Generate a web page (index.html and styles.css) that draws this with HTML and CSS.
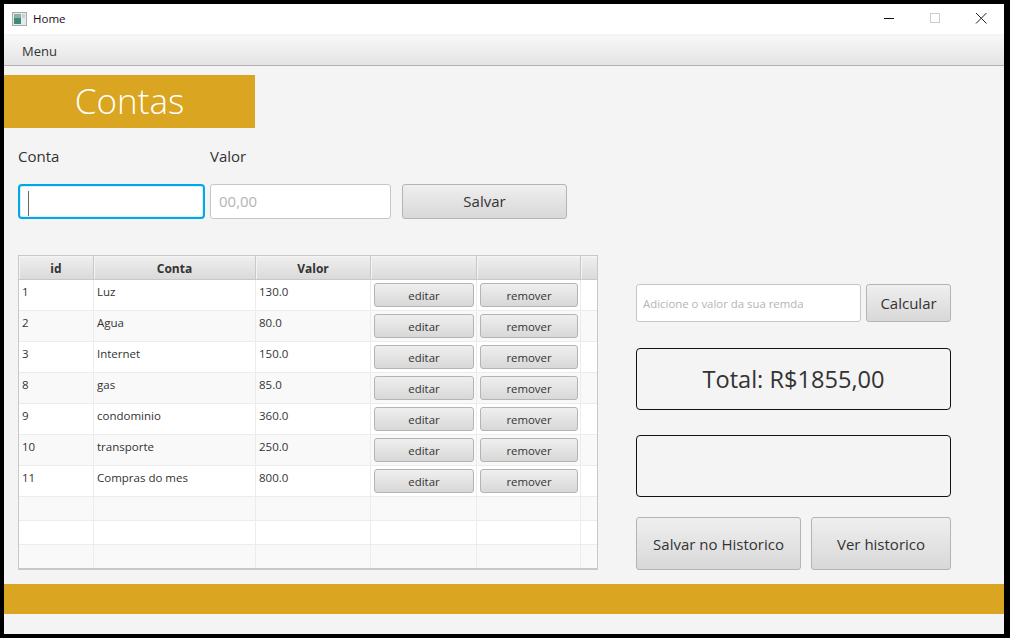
FILE: index.html
```html
<!DOCTYPE html>
<html lang="en">
<head>
  <meta charset="UTF-8">
  <meta name="viewport" content="width=device-width, initial-scale=1.0">
  <title>Home</title>
  <link rel="stylesheet" href="styles.css">
</head>
<body>
  <div class="window">
    <header class="titlebar">
      <svg class="app-icon" width="15" height="14" viewBox="0 0 15 14">
        <rect x="0.5" y="0.5" width="14" height="13" fill="#e6eaea" stroke="#a8acac"/>
        <rect x="2" y="2" width="7" height="10" fill="#8fb0aa"/>
        <rect x="2" y="6" width="7" height="6" fill="#3f8a78"/>
        <rect x="10" y="2" width="3" height="4" fill="#c4d4d8"/>
      </svg>
      <span class="title">Home</span>
      <div class="controls">
        <svg width="46" height="30" viewBox="0 0 46 30"><path d="M18 14.500h10" stroke="#111" fill="none"/></svg>
        <svg width="46" height="30" viewBox="0 0 46 30"><rect x="18.500" y="9.500" width="9" height="9" fill="none" stroke="#ccc"/></svg>
        <svg width="46" height="30" viewBox="0 0 46 30"><path d="M18 9l10.500 10.500M28.500 9L18 19.500" stroke="#222" fill="none"/></svg>
      </div>
    </header>
    <nav class="menubar"><span class="menu-item">Menu</span></nav>

    <h1 class="banner">Contas</h1>

    <main class="content">
      <section class="left">
        <div class="labels">
          <label class="conta-label">Conta</label>
          <label>Valor</label>
        </div>
        <div class="form-row">
          <div class="input-focused"><span class="caret"></span></div>
          <input class="input valor-input" type="text" placeholder="00,00">
          <button class="btn salvar">Salvar</button>
        </div>

        <table class="contas">
          <thead>
            <tr>
              <th class="col-id">id</th>
              <th class="col-conta">Conta</th>
              <th class="col-valor">Valor</th>
              <th class="col-edit"></th>
              <th class="col-rem"></th>
              <th class="col-bar"></th>
            </tr>
          </thead>
          <tbody>
            <tr><td>1</td><td>Luz</td><td>130.0</td><td><button class="btn small edit">editar</button></td><td><button class="btn small">remover</button></td><td></td></tr>
            <tr><td>2</td><td>Agua</td><td>80.0</td><td><button class="btn small edit">editar</button></td><td><button class="btn small">remover</button></td><td></td></tr>
            <tr><td>3</td><td>Internet</td><td>150.0</td><td><button class="btn small edit">editar</button></td><td><button class="btn small">remover</button></td><td></td></tr>
            <tr><td>8</td><td>gas</td><td>85.0</td><td><button class="btn small edit">editar</button></td><td><button class="btn small">remover</button></td><td></td></tr>
            <tr><td>9</td><td>condominio</td><td>360.0</td><td><button class="btn small edit">editar</button></td><td><button class="btn small">remover</button></td><td></td></tr>
            <tr><td>10</td><td>transporte</td><td>250.0</td><td><button class="btn small edit">editar</button></td><td><button class="btn small">remover</button></td><td></td></tr>
            <tr><td>11</td><td>Compras do mes</td><td>800.0</td><td><button class="btn small edit">editar</button></td><td><button class="btn small">remover</button></td><td></td></tr>
            <tr class="empty"><td></td><td></td><td></td><td></td><td></td><td></td></tr>
            <tr class="empty"><td></td><td></td><td></td><td></td><td></td><td></td></tr>
            <tr class="empty"><td></td><td></td><td></td><td></td><td></td><td></td></tr>
          </tbody>
        </table>
      </section>

      <aside class="right">
        <div class="renda-row">
          <input class="input renda-input" type="text" placeholder="Adicione o valor da sua remda">
          <button class="btn calcular">Calcular</button>
        </div>
        <div class="box total">Total: R$1855,00</div>
        <div class="box"></div>
        <div class="hist-row">
          <button class="btn salvar-hist">Salvar no Historico</button>
          <button class="btn ver-hist">Ver historico</button>
        </div>
      </aside>
    </main>

    <div class="footer-bar"></div>
  </div>
</body>
</html>
```

FILE: styles.css
```css
* {
  box-sizing: border-box;
}
html, body {
  height: 100%;
}
body {
  margin: 0;
  padding: 4px 6px 4px 4px;
  background: #000;
  font-family: "Open Sans", "Noto Sans", sans-serif;
  color: #333;
}
.window {
  width: 1000px;
  height: 630px;
  background: #f4f4f4;
  display: flex;
  flex-direction: column;
}

/* title bar */
.titlebar {
  height: 30px;
  flex: none;
  background: #fff;
  display: flex;
  align-items: center;
  padding-left: 8px;
  font-size: 11.500px;
  color: #1a0a20;
}
.app-icon {
  margin-right: 6px;
}
.title {
  padding-bottom: 1px;
}
.controls {
  margin-left: auto;
  display: flex;
}
.controls svg {
  display: block;
}

/* menu */
.menubar {
  height: 32px;
  flex: none;
  border-top: 2px solid #f4f4f4;
  border-bottom: 1px solid #b0b0b0;
  background: linear-gradient(#f8f8f8, #e4e4e4);
  display: flex;
  align-items: center;
  padding-left: 18px;
  font-size: 13px;
}
.banner {
  margin: 9px 0 0;
  width: 251px;
  height: 53px;
  flex: none;
  background: #daa520;
  color: #fff;
  font-size: 35px;
  font-weight: 300;
  line-height: 51px;
  text-align: center;
}

/* main area */
.content {
  flex: 1;
  display: flex;
  align-items: flex-end;
  padding-left: 14px;
  gap: 38px;
}
.left {
  width: 580px;
}
.labels {
  display: flex;
  font-size: 15px;
  height: 20px;
  line-height: 20px;
  margin-bottom: 18px;
}
.conta-label {
  width: 192px;
}
.form-row {
  display: flex;
  height: 35px;
  margin-bottom: 36px;
}
.input {
  border: 1px solid #c6c6c6;
  border-radius: 3px;
  background: #fff;
  font-family: inherit;
  color: #333;
  outline: none;
}
.input::placeholder {
  color: #b4b4b4;
  opacity: 1;
}
.input-focused {
  width: 187px;
  margin-right: 5px;
  border: 2px solid #00a9e6;
  border-radius: 4px;
  background: #fff;
  box-shadow: inset 0 0 0 1px #d8f0fa;
  padding: 5px 8px;
}
.caret {
  display: block;
  width: 1px;
  height: 25px;
  background: #666;
}
.valor-input {
  width: 181px;
  margin-right: 11px;
  font-size: 15px;
  padding: 0 8px 2px;
}
.btn {
  border: 1px solid #b4b4b4;
  border-radius: 3px;
  background: linear-gradient(#efefef, #d8d8d8);
  font-family: inherit;
  color: #333;
  padding: 0;
}
.salvar {
  width: 165px;
  font-size: 15px;
  padding-bottom: 2px;
}

/* table */
.contas {
  width: 580px;
  table-layout: fixed;
  border-collapse: separate;
  border-spacing: 0;
  border: 1px solid #c8c8c8;
  border-bottom-width: 2px;
  background: #fff;
  font-size: 11.500px;
}
.col-id { width: 75px; }
.col-conta { width: 162px; }
.col-valor { width: 115px; }
.col-edit { width: 106px; }
.col-rem { width: 104px; }
.contas th {
  height: 24px;
  padding: 1px 0 0;
  background: linear-gradient(#efefef, #dadada);
  border-right: 1px solid #c8c8c8;
  border-bottom: 1px solid #c8c8c8;
  box-shadow: inset 1px 1px 0 #f4f4f4;
  font-size: 12px;
  font-weight: 700;
}
.contas td {
  height: 31px;
  padding: 3px 3px 0;
  vertical-align: top;
  border-right: 1px solid #ececec;
  border-bottom: 1px solid #ececec;
  line-height: 18px;
}
.contas th:last-child,
.contas td:last-child {
  border-right: none;
}
.contas tbody tr:nth-child(even) td {
  background: #f9f9f9;
}
.contas .empty td {
  height: 24px;
  padding: 0;
}
.contas tr:last-child td {
  height: 23px;
  border-bottom: none;
}
.small {
  display: block;
  width: 98px;
  height: 24px;
  font-size: 11.400px;
}
.edit {
  width: 100px;
}

/* right column */
.right {
  width: 315px;
}
.renda-row {
  display: flex;
  height: 38px;
  margin-bottom: 26px;
}
.renda-input {
  width: 225px;
  margin-right: 5px;
  font-size: 11.400px;
  padding: 0 6px;
}
.calcular {
  width: 85px;
  font-size: 15px;
}
.box {
  height: 62px;
  margin-bottom: 25px;
  border: 1px solid #111;
  border-radius: 4px;
}
.total {
  display: flex;
  align-items: center;
  justify-content: center;
  font-size: 23.600px;
  padding-bottom: 1px;
}
.box + .box {
  margin-bottom: 20px;
}
.hist-row {
  display: flex;
  gap: 10px;
  height: 53px;
}
.salvar-hist {
  width: 165px;
  font-size: 15px;
}
.ver-hist {
  width: 140px;
  font-size: 15px;
}

.footer-bar {
  height: 30px;
  flex: none;
  margin: 14px 0 20px;
  background: #daa520;
}
```
